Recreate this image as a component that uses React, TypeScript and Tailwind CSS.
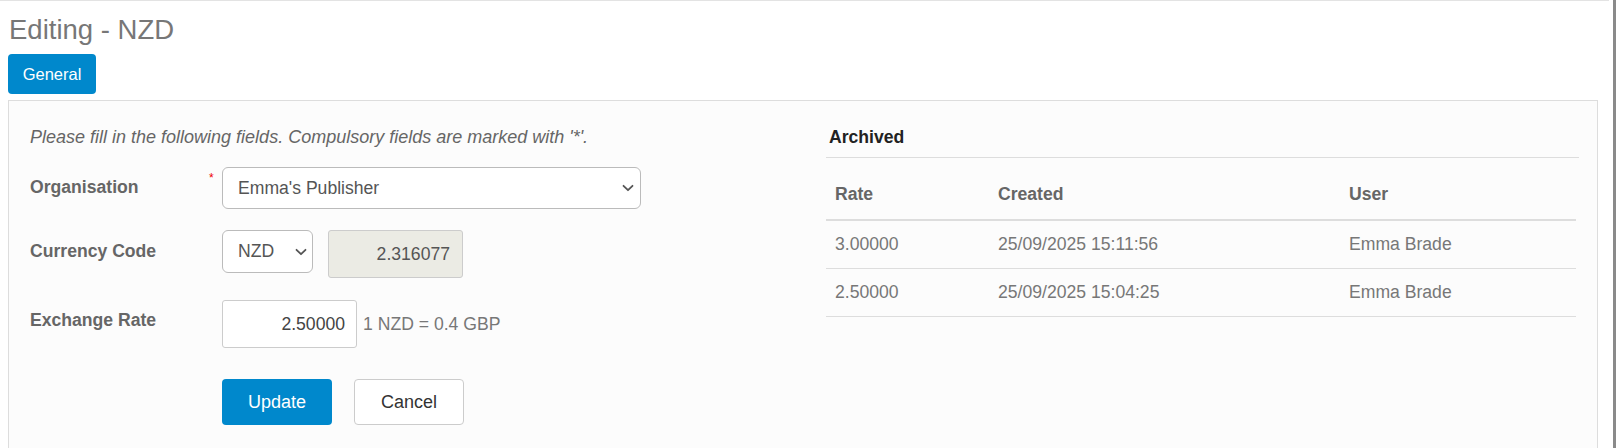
const archived = [
  { rate: '3.00000', created: '25/09/2025 15:11:56', user: 'Emma Brade' },
  { rate: '2.50000', created: '25/09/2025 15:04:25', user: 'Emma Brade' },
];

function Chevron({ className }: { className: string }) {
  return (
    <svg
      className={className}
      width="12"
      height="8"
      viewBox="0 0 12 8"
      fill="none"
      stroke="#555"
      strokeWidth="1.8"
      strokeLinecap="round"
      strokeLinejoin="round"
    >
      <path d="M1.5 1.8 6 6.2l4.5-4.4" />
    </svg>
  );
}

export default function App() {
  return (
    <div className="flex h-[448px] overflow-hidden bg-white font-['Liberation_Sans',Arial,sans-serif]">
      <div className="flex-1 border-t border-[#e3e3e3] pl-2 pr-[11px]">
        {/* Title */}
        <h1 className="pl-px pt-[14px] text-[27.5px] leading-[30px] text-[#777]">Editing - NZD</h1>

        {/* Tab */}
        <div className="mt-[9px] flex">
          <button className="h-10 w-[88px] rounded-[4px] bg-[#0088cc] text-[16.5px] text-white">General</button>
        </div>

        {/* Panel */}
        <div className="mt-[6px] flex border border-[#ddd] bg-[#fcfcfc] pb-[60px] pl-[21px] pr-[18px] pt-[24px]">
          {/* Form */}
          <div className="flex-1">
            <p className="text-[18px] leading-[25px] italic text-[#666]">
              Please fill in the following fields. Compulsory fields are marked with '*'.
            </p>

            <div className="mt-[17px] flex">
              <label className="w-[175px] pt-[8px] text-[17.6px] font-bold leading-[25px] text-[#666]">Organisation</label>
              <span className="w-[17px] pl-[4px] pt-[5px] text-[12px] leading-[12px] text-[#e00]">*</span>
              <div className="relative">
                <select className="h-[42px] w-[419px] appearance-none rounded-[6px] border border-[#bbb] bg-white pl-[15px] text-[17.6px] text-[#555] outline-none">
                  <option>Emma's Publisher</option>
                </select>
                <Chevron className="pointer-events-none absolute right-[7px] top-[17px]" />
              </div>
            </div>

            <div className="mt-[21px] flex items-start">
              <label className="w-[192px] pt-[9px] text-[17.6px] font-bold leading-[25px] text-[#666]">Currency Code</label>
              <div className="relative">
                <select className="h-[43px] w-[91px] appearance-none rounded-[6px] border border-[#bbb] bg-white pl-[15px] text-[17.6px] text-[#555] outline-none">
                  <option>NZD</option>
                </select>
                <Chevron className="pointer-events-none absolute right-[6px] top-[18px]" />
              </div>
              <input
                disabled
                value="2.316077"
                readOnly
                className="ml-[15px] h-[48px] w-[135px] rounded-[3px] border border-[#ccc] bg-[#ebebe4] pr-[12px] text-right text-[17.6px] text-[#555]"
              />
            </div>

            <div className="mt-[22px] flex items-start">
              <label className="w-[192px] pt-[8px] text-[17.6px] font-bold leading-[25px] text-[#666]">Exchange Rate</label>
              <div className="flex items-center">
                <input
                  value="2.50000"
                  readOnly
                  className="h-[48px] w-[135px] rounded-[3px] border border-[#ccc] bg-white pr-[11px] text-right text-[17.6px] text-[#444] outline-none"
                />
                <span className="ml-[6px] text-[17.6px] text-[#777]">1 NZD = 0.4 GBP</span>
              </div>
            </div>

            <div className="mt-[31px] flex pl-[192px]">
              <button className="h-[46px] w-[110px] rounded-[4px] bg-[#0088cc] text-[18px] text-white">Update</button>
              <button className="ml-[22px] h-[46px] w-[110px] rounded-[4px] border border-[#ccc] bg-white text-[18px] text-[#333]">
                Cancel
              </button>
            </div>
          </div>

          {/* Archived rates */}
          <div className="w-[753px]">
            <h3 className="border-b border-[#ddd] pb-[7px] pl-[3px] text-[17.6px] font-bold leading-[25px] text-[#222]">Archived</h3>
            <table className="mt-[12px] w-[750px] border-collapse text-left text-[17.6px] leading-[25px]">
              <thead>
                <tr className="border-b-2 border-[#ddd]">
                  <th className="w-[163px] px-[9px] py-[12px] font-bold text-[#666]">Rate</th>
                  <th className="w-[351px] px-[9px] py-[12px] font-bold text-[#666]">Created</th>
                  <th className="px-[9px] py-[12px] font-bold text-[#666]">User</th>
                </tr>
              </thead>
              <tbody>
                {archived.map((row) => (
                  <tr key={row.created} className="border-b border-[#ddd]">
                    <td className="px-[9px] py-[11px] text-[#777]">{row.rate}</td>
                    <td className="px-[9px] py-[11px] text-[#777]">{row.created}</td>
                    <td className="px-[9px] py-[11px] text-[#777]">{row.user}</td>
                  </tr>
                ))}
              </tbody>
            </table>
          </div>
        </div>
      </div>

      {/* Scroll strip */}
      <div className="w-[7px] pl-[4px]">
        <div className="h-full w-[3px] bg-[#8a8a8a]" />
      </div>
    </div>
  );
}
